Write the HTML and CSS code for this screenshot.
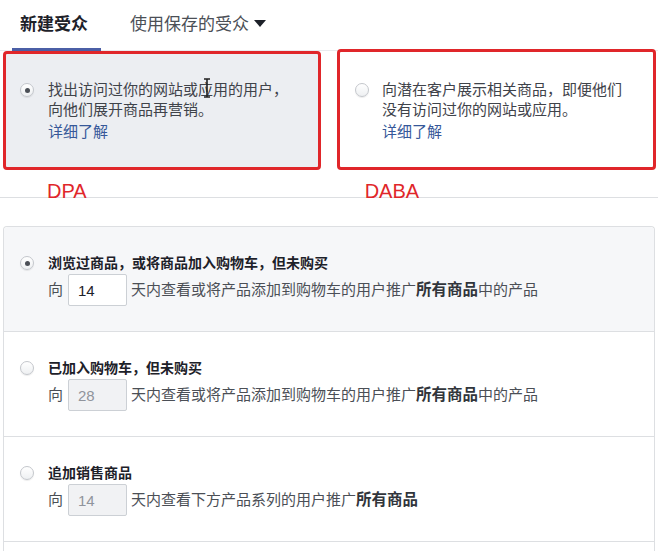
FILE: index.html
```html
<!DOCTYPE html>
<html>

<head>
	<meta charset="utf-8">
	<meta name="viewport" content="width=device-width">
	<title>受众</title>
	<link rel="stylesheet" href="styles.css">
</head>

<body>
	<nav class="tabs">
		<div class="tab active">新建受众</div>
		<div class="tab">使用保存的受众
			<svg class="caret" width="12" height="7" viewBox="0 0 12 7"><path d="M0 0 L12 0 L6 7 Z" fill="#1d2129"/></svg>
		</div>
	</nav>

	<section class="choices">
		<div class="choice selected">
			<span class="radio on"></span>
			<div class="choiceText">
				<p>找出访问过你的网站或应用的用户，<br>向他们展开商品再营销。</p>
				<a href="#">详细了解</a>
			</div>
			<svg class="ibeam" width="8" height="20" viewBox="0 0 8 20"><path d="M1 1 H7 M4 1 V19 M1 19 H7" stroke="#222" stroke-width="1.6" fill="none"/></svg>
		</div>
		<div class="choice">
			<span class="radio"></span>
			<div class="choiceText">
				<p>向潜在客户展示相关商品，即便他们<br>没有访问过你的网站或应用。</p>
				<a href="#">详细了解</a>
			</div>
		</div>
	</section>

	<div class="notes">
		<span class="note dpa">DPA</span>
		<span class="note daba">DABA</span>
	</div>

	<section class="panel">
		<div class="row current">
			<span class="radio on"></span>
			<div class="rowBody">
				<h4>浏览过商品，或将商品加入购物车，但未购买</h4>
				<div class="days">向 <input type="text" value="14"> 天内查看或将产品添加到购物车的用户推广<b>所有商品</b>中的产品</div>
			</div>
		</div>
		<div class="row">
			<span class="radio"></span>
			<div class="rowBody">
				<h4>已加入购物车，但未购买</h4>
				<div class="days">向 <input type="text" value="28" disabled> 天内查看或将产品添加到购物车的用户推广<b>所有商品</b>中的产品</div>
			</div>
		</div>
		<div class="row">
			<span class="radio"></span>
			<div class="rowBody">
				<h4>追加销售商品</h4>
				<div class="days">向 <input type="text" value="14" disabled> 天内查看下方产品系列的用户推广<b>所有商品</b></div>
			</div>
		</div>
		<div class="row empty"></div>
	</section>
</body>

</html>
```

FILE: styles.css
```css
html, body {
	margin: 0;
	padding: 0;
	background: #fff;
	font-family: "Liberation Sans", "Noto Sans CJK SC", sans-serif;
	color: #4b4f56;
	overflow: hidden;
}

.tabs {
	display: flex;
	border-bottom: 1px solid #e9ebee;
	padding-left: 12px;
	box-sizing: border-box;
	height: 51px;
}
.tab {
	display: flex;
	align-items: center;
	padding: 0 10px 3px 8px;
	font-size: 17px;
	color: #4b4f56;
	border-bottom: 3px solid transparent;
	margin-bottom: -1px;
}
.tab.active {
	font-weight: bold;
	color: #1d2129;
	border-bottom-color: #4b5fa6;
	padding-right: 13px;
}
.tab + .tab {
	margin-left: 29px;
	padding-left: 0;
}
.caret {
	margin-left: 5px;
	margin-top: 2px;
}

.choices {
	display: flex;
	padding: 0 2px 0 3px;
	gap: 16px;
}
.choice {
	position: relative;
	flex: 1;
	display: flex;
	align-items: flex-start;
	height: 119px;
	box-sizing: border-box;
	border: 3px solid #e0262a;
	border-radius: 4px;
	padding: 26px 10px 0 14px;
	background: #fff;
}
.choice.selected {
	background: #eceef2;
}
.choice + .choice {
	margin-top: -2px;
	height: 121px;
	padding-top: 28px;
	padding-left: 15px;
}
.choiceText {
	margin-left: 14px;
	font-size: 15px;
	line-height: 20px;
}
.choice + .choice .choiceText {
	margin-left: 13px;
}
.choiceText p {
	margin: 0;
	color: #3f434a;
}
.choiceText a {
	display: block;
	margin-top: 2px;
	color: #365899;
	text-decoration: none;
}
.ibeam {
	position: absolute;
	left: 197px;
	top: 24px;
}

.radio {
	flex: none;
	display: inline-block;
	width: 14px;
	height: 14px;
	margin-top: 3px;
	box-sizing: border-box;
	border-radius: 50%;
	border: 1px solid #c4c7cc;
	background: linear-gradient(180deg, #fff, #eef0f2);
	box-shadow: 0 1px 1px rgba(0,0,0,0.08);
	position: relative;
}
.radio.on::after {
	content: "";
	position: absolute;
	left: 3.5px;
	top: 3.5px;
	width: 5px;
	height: 5px;
	border-radius: 50%;
	background: #4b4f56;
}

.notes {
	height: 27px;
	border-bottom: 1px solid #dddfe2;
	position: relative;
	display: flex;
}
.note {
	color: #e0262a;
	font-size: 20px;
	line-height: 20px;
	padding-top: 11px;
	height: 20px;
}
.dpa {
	margin-left: 47px;
}
.daba {
	margin-left: 278px;
}

.panel {
	margin: 28px 3px 0 3px;
	border: 1px solid #dddfe2;
	border-bottom: none;
	border-radius: 4px 4px 0 0;
}
.row {
	display: flex;
	align-items: flex-start;
	padding: 26px 16px 25px 16px;
	border-bottom: 1px solid #dddfe2;
	background: #fff;
}
.row.current {
	background: #f6f7f9;
	border-radius: 4px 4px 0 0;
}
.row.empty {
	height: 40px;
	border-bottom: none;
}
.rowBody {
	margin-left: 14px;
}
.rowBody h4 {
	margin: 0;
	font-size: 14px;
	line-height: 20px;
	font-weight: bold;
	color: #1d2129;
}
.days {
	display: flex;
	align-items: center;
	margin-top: 1px;
	font-size: 15px;
	line-height: 20px;
	color: #4b4f56;
	white-space: nowrap;
}
.days b {
	color: #31353b;
	font-size: 15.5px;
}
.days input {
	width: 59px;
	height: 32px;
	box-sizing: border-box;
	margin: 0 4px 0 5px;
	padding: 0 9px;
	border: 1px solid #ccd0d5;
	border-radius: 2px;
	background: #fff;
	font-family: "Liberation Sans", sans-serif;
	font-size: 15px;
	color: #1d2129;
}
.days input:disabled {
	background: #f1f2f4;
	color: #90949c;
}
```
